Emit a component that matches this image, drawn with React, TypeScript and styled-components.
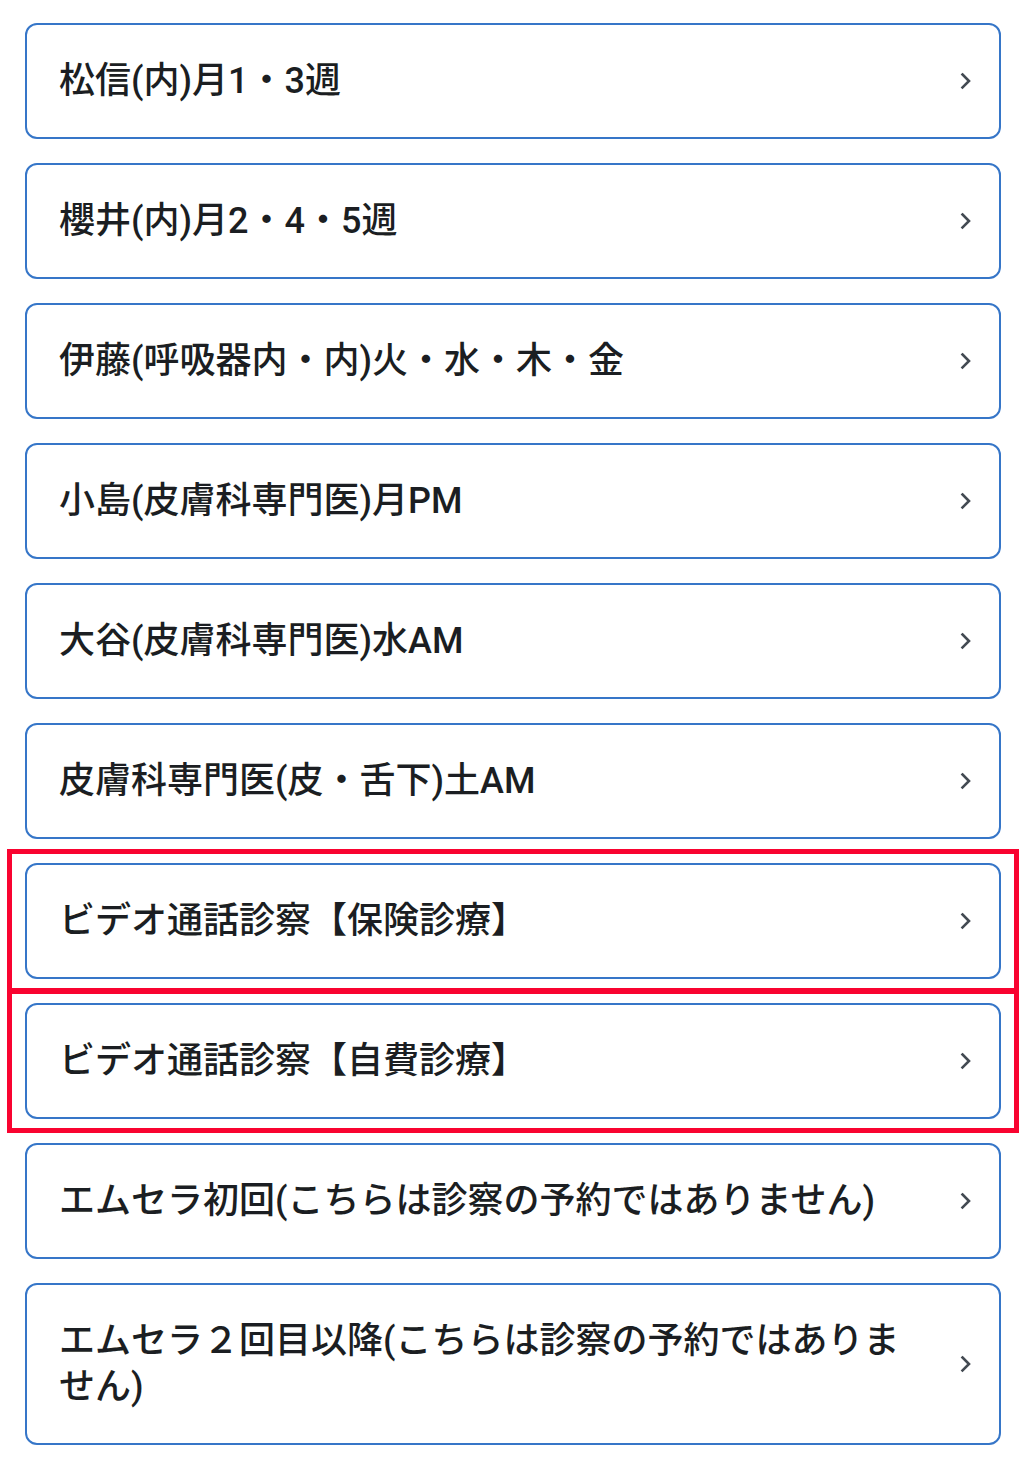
import React from "react";
import styled, { createGlobalStyle } from "styled-components";

const Global = createGlobalStyle`
  html, body { margin: 0; padding: 0; background: #ffffff; }
  body { font-family: Roboto, "Noto Sans CJK JP", sans-serif; }
`;

const List = styled.div`
  display: flex;
  flex-direction: column;
  gap: 24px;
  padding: 23px 29px 22px 25px;
`;

const Item = styled.div`
  position: relative;
`;

const Card = styled.a`
  display: flex;
  align-items: center;
  gap: 20px;
  box-sizing: border-box;
  padding: 33px 28px 33px 32px;
  border: 2px solid #3676c8;
  border-radius: 12px;
  background: #ffffff;
  text-decoration: none;
  cursor: pointer;
`;

const Label = styled.span`
  flex: 1;
  font-family: Roboto, "Noto Sans CJK JP", sans-serif;
  font-size: 36px;
  line-height: 46px;
  font-weight: 500;
  color: #1b1e22;
  padding-right: 18px;
`;

const Highlight = styled.div`
  position: absolute;
  top: -14px;
  bottom: -14px;
  left: -18px;
  right: -18px;
  border: 5px solid #f90330;
  pointer-events: none;
`;

const Chevron = () => (
  <svg width="12" height="18" viewBox="0 0 12 18" fill="none">
    <polyline
      points="3.5,2.5 10,9 3.5,15.5"
      stroke="#434a52"
      strokeWidth="2.6"
      strokeLinecap="square"
      strokeLinejoin="miter"
    />
  </svg>
);

const items: { label: string; highlight?: boolean }[] = [
  { label: "松信(内)月1・3週" },
  { label: "櫻井(内)月2・4・5週" },
  { label: "伊藤(呼吸器内・内)火・水・木・金" },
  { label: "小島(皮膚科専門医)月PM" },
  { label: "大谷(皮膚科専門医)水AM" },
  { label: "皮膚科専門医(皮・舌下)土AM" },
  { label: "ビデオ通話診察【保険診療】", highlight: true },
  { label: "ビデオ通話診察【自費診療】", highlight: true },
  { label: "エムセラ初回(こちらは診察の予約ではありません)" },
  { label: "エムセラ２回目以降(こちらは診察の予約ではありません)" },
];

export default function App() {
  return (
    <>
      <Global />
      <List>
        {items.map((it) => (
          <Item key={it.label}>
            <Card>
              <Label>{it.label}</Label>
              <Chevron />
            </Card>
            {it.highlight && <Highlight />}
          </Item>
        ))}
      </List>
    </>
  );
}
